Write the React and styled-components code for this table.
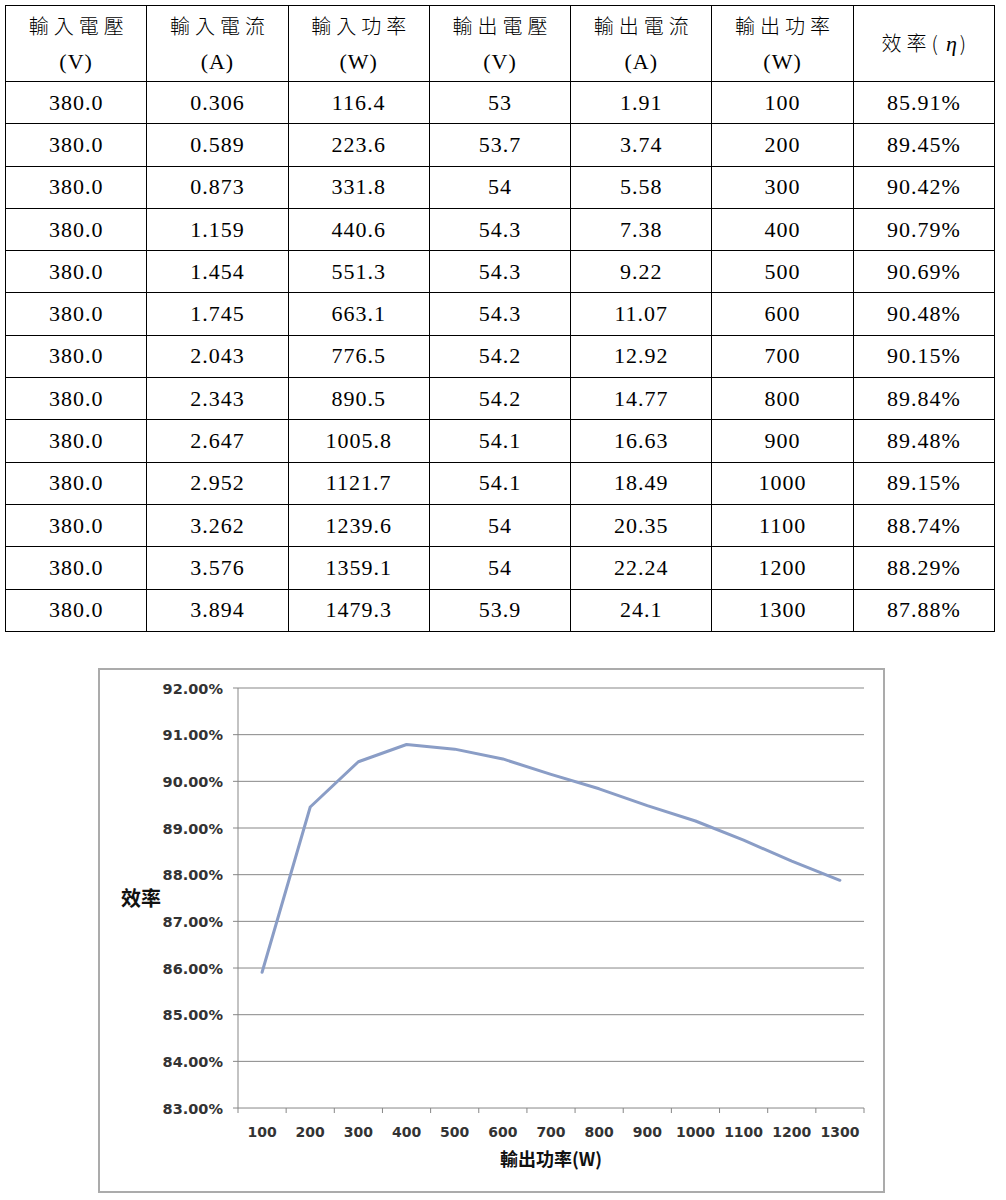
import React from "react";
import styled, { createGlobalStyle } from "styled-components";

const GlobalStyle = createGlobalStyle`
  html, body {
    margin: 0;
    padding: 0;
    background: #ffffff;
  }
`;

const Page = styled.div`
  width: 1006px;
  padding: 5px 0 0 5px;
  box-sizing: border-box;
`;

const DataTable = styled.table`
  width: 990px;
  table-layout: fixed;
  border-collapse: collapse;
  color: #000;
  font-family: "Liberation Serif", "Noto Sans CJK TC", serif;
`;

const HeadCell = styled.th`
  border: 1px solid #000;
  height: 75px;
  padding: 0;
  font-weight: normal;
  text-align: center;
  vertical-align: middle;
`;

const HeadLabel = styled.div`
  font-family: "Noto Sans CJK TC", sans-serif;
  font-weight: 300;
  font-size: 20px;
  letter-spacing: 5px;
  padding-left: 5px;
  line-height: 36px;
`;

const HeadUnit = styled.div`
  font-family: "Liberation Serif", serif;
  font-size: 22px;
  letter-spacing: 1px;
  line-height: 36px;
`;

const EtaSymbol = styled.span`
  font-family: "Liberation Serif", serif;
  font-style: italic;
  font-size: 22px;
  letter-spacing: 0;
  padding: 0 3px;
`;

const Cell = styled.td`
  border: 1px solid #000;
  height: 41.3px;
  padding: 0;
  text-align: center;
  vertical-align: middle;
  font-size: 22px;
  letter-spacing: 1px;
`;

const ChartFrame = styled.div`
  width: 787px;
  height: 525px;
  margin: 36px 0 0 93px;
  border: 2px solid #ababab;
  box-sizing: border-box;
  background: #fff;
`;

const ChartSvg = styled.svg`
  display: block;
  font-family: "DejaVu Sans", "Noto Sans CJK TC", sans-serif;
`;

const headers = [
  ["輸入電壓", "(V)"],
  ["輸入電流", "(A)"],
  ["輸入功率", "(W)"],
  ["輸出電壓", "(V)"],
  ["輸出電流", "(A)"],
  ["輸出功率", "(W)"],
];

const rows = [
  ["380.0", "0.306", "116.4", "53", "1.91", "100", "85.91%"],
  ["380.0", "0.589", "223.6", "53.7", "3.74", "200", "89.45%"],
  ["380.0", "0.873", "331.8", "54", "5.58", "300", "90.42%"],
  ["380.0", "1.159", "440.6", "54.3", "7.38", "400", "90.79%"],
  ["380.0", "1.454", "551.3", "54.3", "9.22", "500", "90.69%"],
  ["380.0", "1.745", "663.1", "54.3", "11.07", "600", "90.48%"],
  ["380.0", "2.043", "776.5", "54.2", "12.92", "700", "90.15%"],
  ["380.0", "2.343", "890.5", "54.2", "14.77", "800", "89.84%"],
  ["380.0", "2.647", "1005.8", "54.1", "16.63", "900", "89.48%"],
  ["380.0", "2.952", "1121.7", "54.1", "18.49", "1000", "89.15%"],
  ["380.0", "3.262", "1239.6", "54", "20.35", "1100", "88.74%"],
  ["380.0", "3.576", "1359.1", "54", "22.24", "1200", "88.29%"],
  ["380.0", "3.894", "1479.3", "53.9", "24.1", "1300", "87.88%"],
];

// plot area in page coordinates
const X0 = 238;
const X1 = 864;
const Y_TOP = 687;
const PER_PCT = 46.67;
const STEP = (X1 - X0) / 13;
const yOf = (v) => Y_TOP + (92 - v) * PER_PCT;

function EfficiencyChart() {
  const values = rows.map((r) => parseFloat(r[6]));
  const points = values
    .map((v, i) => `${X0 + STEP * (i + 0.5)},${yOf(v)}`)
    .join(" ");
  const levels = [92, 91, 90, 89, 88, 87, 86, 85, 84, 83];

  return (
    <ChartFrame>
      <ChartSvg width="783" height="521" viewBox="100 669 783 521">
        {levels.map((lv) => (
          <g key={lv}>
            <line
              x1={X0 - 5}
              x2={X1}
              y1={yOf(lv)}
              y2={yOf(lv)}
              stroke="#878787"
              strokeWidth="1"
            />
            <text
              x="223"
              y={yOf(lv) + 5.5}
              textAnchor="end"
              fontSize="14.5"
              fontWeight="bold"
              fill="#333"
            >
              {lv.toFixed(2)}%
            </text>
          </g>
        ))}
        <line x1={X0} x2={X0} y1={Y_TOP} y2={yOf(83)} stroke="#878787" />
        {Array.from({ length: 14 }).map((_, k) => (
          <line
            key={k}
            x1={X0 + STEP * k}
            x2={X0 + STEP * k}
            y1={yOf(83)}
            y2={yOf(83) + 5}
            stroke="#878787"
          />
        ))}
        {rows.map((r, i) => (
          <text
            key={r[5]}
            x={X0 + STEP * (i + 0.5)}
            y="1136"
            textAnchor="middle"
            fontSize="14"
            fontWeight="bold"
            fill="#333"
          >
            {r[5]}
          </text>
        ))}
        <polyline
          points={points}
          fill="none"
          stroke="#8a9dc6"
          strokeWidth="3"
          strokeLinejoin="round"
          strokeLinecap="round"
        />
        <text
          x="141"
          y="905"
          textAnchor="middle"
          fontSize="20"
          fontWeight="bold"
          fill="#111"
          fontFamily='"Noto Sans CJK TC", sans-serif'
        >
          效率
        </text>
        <text
          x="551"
          y="1165"
          textAnchor="middle"
          fontSize="18"
          fontWeight="bold"
          fill="#111"
          fontFamily='"Noto Sans CJK TC", sans-serif'
        >
          輸出功率(W)
        </text>
      </ChartSvg>
    </ChartFrame>
  );
}

export default function App() {
  return (
    <Page>
      <GlobalStyle />
      <DataTable>
        <thead>
          <tr>
            {headers.map(([label, unit]) => (
              <HeadCell key={label}>
                <HeadLabel>{label}</HeadLabel>
                <HeadUnit>{unit}</HeadUnit>
              </HeadCell>
            ))}
            <HeadCell>
              <HeadLabel>
                效率(<EtaSymbol>η</EtaSymbol>)
              </HeadLabel>
            </HeadCell>
          </tr>
        </thead>
        <tbody>
          {rows.map((r, i) => (
            <tr key={i}>
              {r.map((v, j) => (
                <Cell key={j}>{v}</Cell>
              ))}
            </tr>
          ))}
        </tbody>
      </DataTable>
      <EfficiencyChart />
    </Page>
  );
}
